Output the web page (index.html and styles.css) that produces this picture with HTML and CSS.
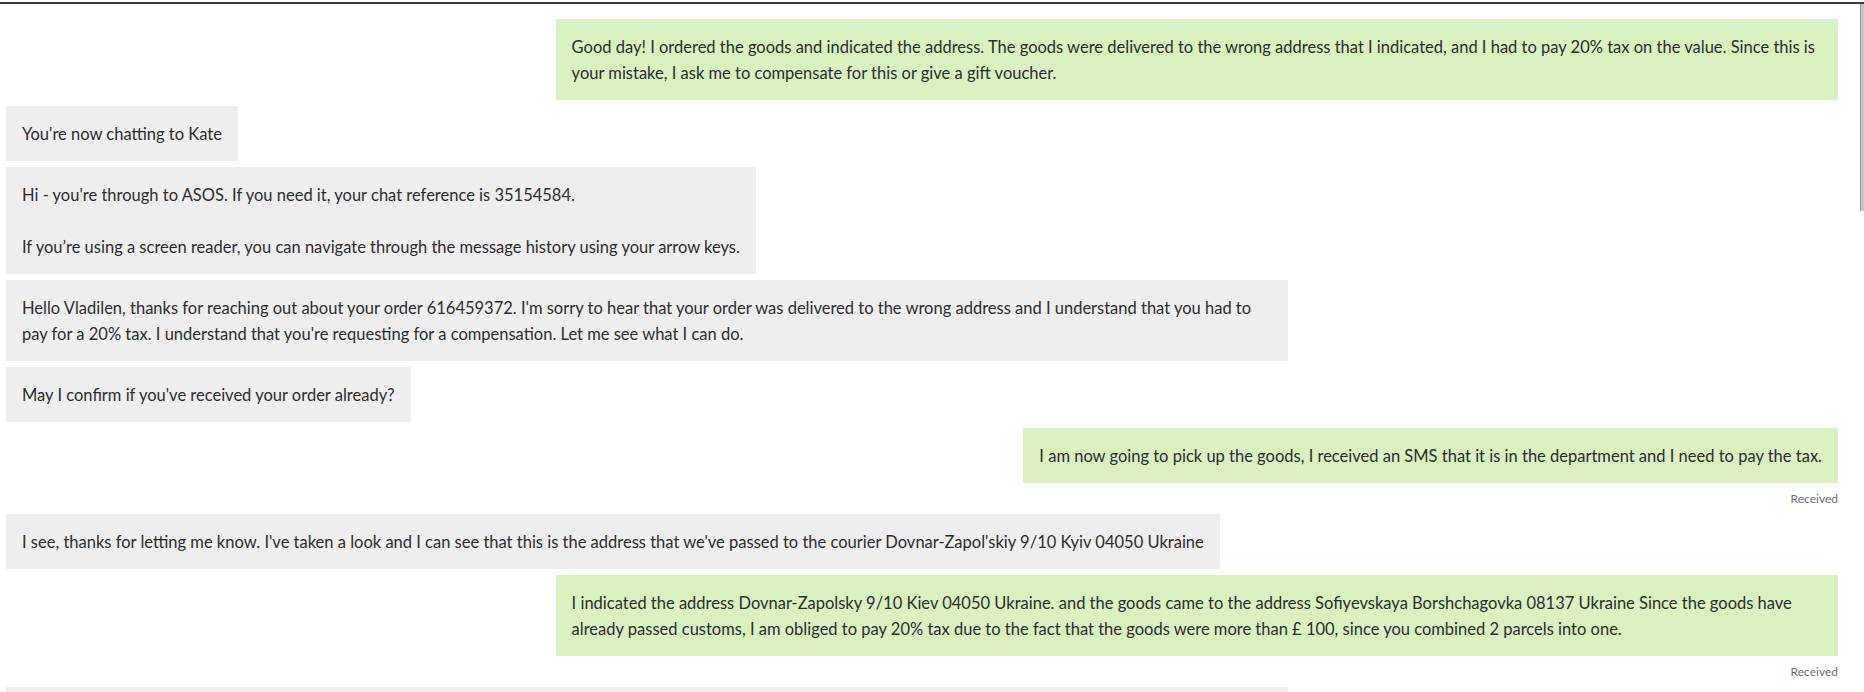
FILE: index.html
```html
<!DOCTYPE html>
<html lang="en">
<head>
  <meta charset="UTF-8" />
  <title>Chat</title>
  <link rel="stylesheet" href="styles.css">
</head>
<body>

  <div class="chat-window">
    <div class="messages">

      <div class="msg customer long">Good day! I ordered the goods and indicated the address. The goods were delivered to the wrong address that I indicated, and I had to pay 20% tax on the value. Since this is<br>your mistake, I ask me to compensate for this or give a gift voucher.</div>

      <div class="msg agent">You're now chatting to Kate</div>

      <div class="msg agent">Hi - you're through to ASOS. If you need it, your chat reference is 35154584.<br><br>If you’re using a screen reader, you can navigate through the message history using your arrow keys.</div>

      <div class="msg agent long">Hello Vladilen, thanks for reaching out about your order 616459372. I'm sorry to hear that your order was delivered to the wrong address and I understand that you had to<br>pay for a 20% tax. I understand that you're requesting for a compensation. Let me see what I can do.</div>

      <div class="msg agent">May I confirm if you've received your order already?</div>

      <div class="msg customer">I am now going to pick up the goods, I received an SMS that it is in the department and I need to pay the tax.</div>
      <div class="status">Received</div>

      <div class="msg agent">I see, thanks for letting me know. I've taken a look and I can see that this is the address that we've passed to the courier Dovnar-Zapol'skiy 9/10 Kyiv 04050 Ukraine</div>

      <div class="msg customer long">I indicated the address Dovnar-Zapolsky 9/10 Kiev 04050 Ukraine. and the goods came to the address Sofiyevskaya Borshchagovka 08137 Ukraine Since the goods have<br>already passed customs, I am obliged to pay 20% tax due to the fact that the goods were more than £ 100, since you combined 2 parcels into one.</div>
      <div class="status">Received</div>

      <div class="msg agent long"></div>

    </div>

    <div class="scroll-track">
      <div class="scroll-thumb"></div>
    </div>
  </div>

</body>
</html>
```

FILE: styles.css
```css
html, body {
  margin: 0;
  height: 100%;
  overflow: hidden;
  background: #fff;
}

body {
  font-family: 'Lato', 'Liberation Sans', sans-serif;
  color: #2d2d2d;
}

.chat-window {
  display: flex;
  height: calc(100% - 4px);
  margin-top: 2px;
  border-top: 2px solid #3a3a3a;
  overflow: hidden;
}

.messages {
  flex: 1;
  display: flex;
  flex-direction: column;
  align-items: flex-start;
  gap: 6px;
  padding: 15px 22px 0 6px;
}

.msg {
  box-sizing: border-box;
  max-width: 70%;
  min-height: 55px;
  padding: 14.5px 16px;
  font-size: 16.5px;
  line-height: 26px;
  flex-shrink: 0;
}

.msg.long {
  width: 70%;
}

.agent {
  background-color: #eeeeee;
}

.customer {
  align-self: flex-end;
  background-color: #d9f0c1;
}

.status {
  align-self: flex-end;
  font-size: 12px;
  line-height: 19px;
  color: #707070;
}

.scroll-track {
  width: 4px;
  flex-shrink: 0;
}

.scroll-thumb {
  height: 207px;
  background: #c6c6c6;
  border-left: 1px solid #9a9a9a;
}
```
